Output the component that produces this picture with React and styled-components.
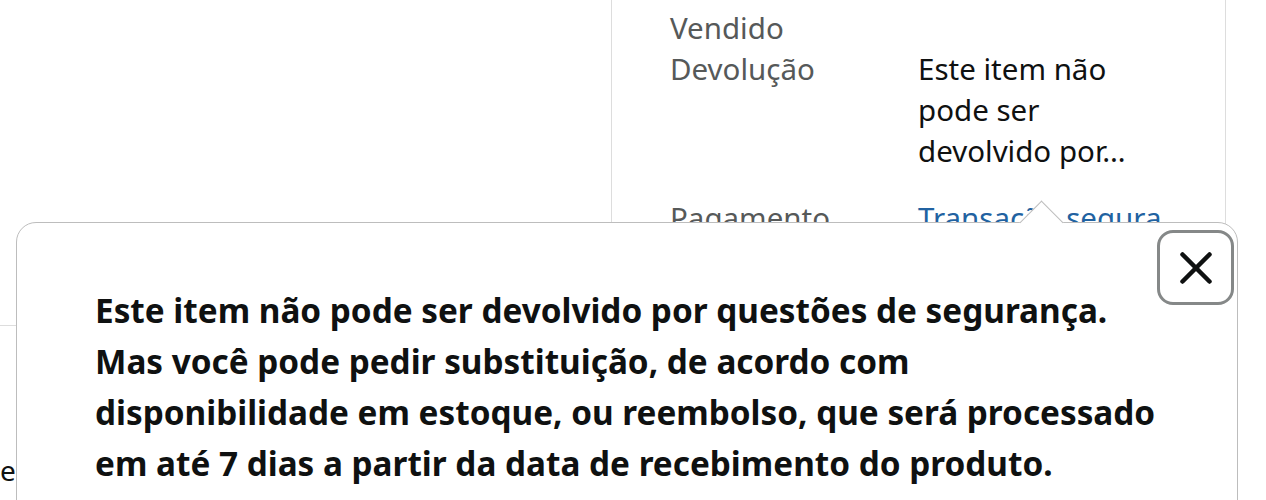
import styled, { createGlobalStyle } from "styled-components";

const GlobalStyle = createGlobalStyle`
  html, body {
    margin: 0;
    padding: 0;
    background: #fff;
    font-family: "Noto Sans", "Liberation Sans", sans-serif;
    color: #0f1111;
  }
  body {
    height: 500px;
    overflow: hidden;
  }
`;

const Page = styled.div`
  position: relative;
  display: grid;
  grid-template-columns: 611px 615px;
  height: 500px;
  overflow: hidden;
`;

const LeftCol = styled.div`
  display: flex;
  flex-direction: column;
`;

const Divider = styled.div`
  margin-top: 325px;
  border-top: 1px solid #dddddd;
  height: 124px;
`;

const LeftText = styled.div`
  font-size: 28px;
  line-height: 41px;
  white-space: nowrap;
`;

const InfoPanel = styled.div`
  border-left: 1px solid #dddddd;
  border-right: 1px solid #dddddd;
  padding-left: 58px;
`;

const Rows = styled.div`
  margin-top: -34px;
  display: flex;
  flex-direction: column;
`;

const Row = styled.div`
  display: grid;
  grid-template-columns: 248px 250px;
  font-size: 29.5px;
  line-height: 41px;
  white-space: nowrap;
  padding-bottom: ${(p) => p.$gap || 0}px;
`;

const Label = styled.div`
  color: #565959;
`;

const Value = styled.div`
  color: ${(p) => (p.$link ? "#2162a1" : "#0f1111")};
`;

const Popover = styled.div`
  position: absolute;
  left: 16px;
  top: 222px;
  width: 1222px;
  height: 340px;
  background: #fff;
  border: 1px solid #bdbdbd;
  border-radius: 20px;
  box-sizing: border-box;
  padding: 62px 0 0 78px;
`;

const Arrow = styled.span`
  position: absolute;
  top: -16px;
  left: 1009px;
  width: 30px;
  height: 30px;
  background: #fff;
  border-top: 1px solid #bdbdbd;
  border-left: 1px solid #bdbdbd;
  transform: rotate(45deg);
`;

const CloseButton = styled.button`
  position: absolute;
  top: 7px;
  right: 3px;
  width: 77px;
  height: 75px;
  box-sizing: border-box;
  border: 3px solid #858888;
  border-radius: 16px;
  background: #fff;
  display: flex;
  align-items: center;
  justify-content: center;
  padding: 0;
  cursor: pointer;
`;

const Message = styled.p`
  margin: 0;
  font-size: 33.3px;
  line-height: 51px;
  font-weight: 700;
  color: #0f1111;
  white-space: nowrap;
`;

export default function App() {
  return (
    <>
      <GlobalStyle />
      <Page>
        <LeftCol>
          <Divider />
          <LeftText>entrega</LeftText>
        </LeftCol>
        <InfoPanel>
          <Rows>
            <Row>
              <Label>
                Enviado /<br />
                Vendido
              </Label>
              <Value>Amazon.com.br</Value>
            </Row>
            <Row $gap={26}>
              <Label>Devolução</Label>
              <Value>
                Este item não
                <br />
                pode ser
                <br />
                devolvido por…
              </Value>
            </Row>
            <Row>
              <Label>Pagamento</Label>
              <Value $link>Transação segura</Value>
            </Row>
          </Rows>
        </InfoPanel>
        <Popover>
          <Arrow />
          <CloseButton aria-label="Fechar">
            <svg width="34" height="34" viewBox="0 0 34 34" fill="none">
              <path
                d="M3.5 3.5 L30.5 30.5 M30.5 3.5 L3.5 30.5"
                stroke="#0f1111"
                strokeWidth="4.5"
                strokeLinecap="round"
              />
            </svg>
          </CloseButton>
          <Message>
            Este item não pode ser devolvido por questões de segurança.
            <br />
            Mas você pode pedir substituição, de acordo com
            <br />
            disponibilidade em estoque, ou reembolso, que será processado
            <br />
            em até 7 dias a partir da data de recebimento do produto.
          </Message>
        </Popover>
      </Page>
    </>
  );
}
